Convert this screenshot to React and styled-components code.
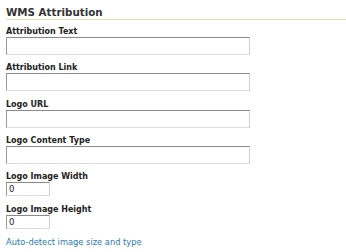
import React from 'react';
import styled, { createGlobalStyle } from 'styled-components';

const GlobalStyle = createGlobalStyle`
  html, body {
    margin: 0;
    padding: 0;
    background: #fff;
  }
  body {
    font-family: "DejaVu Sans", Verdana, sans-serif;
  }
`;

const Panel = styled.div`
  width: 346px;
  height: 252px;
  box-sizing: border-box;
  padding: 5px 0 0 6px;
  display: flex;
  flex-direction: column;
  overflow: hidden;
`;

const Heading = styled.h2`
  margin: 0 0 6px 0;
  font-size: 10.3px;
  line-height: 14px;
  font-weight: bold;
  color: #333;
  border-bottom: 1px solid #dfe2b9;
`;

const Field = styled.div`
  display: flex;
  flex-direction: column;
  align-items: flex-start;
  margin-bottom: 7.33px;
`;

const Label = styled.label`
  font-size: 8px;
  line-height: 11px;
  font-weight: bold;
  color: #222;
`;

const TextInput = styled.input`
  box-sizing: border-box;
  width: ${p => (p.$small ? '44px' : '244px')};
  height: ${p => (p.$small ? '14px' : '18px')};
  margin: 0;
  padding: 0 2px;
  border: 1px solid;
  border-color: #8a8a8a #cfcfcf #dcdcdc #9a9a9a;
  background: #fff;
  font-family: "DejaVu Sans", Verdana, sans-serif;
  font-size: 8.5px;
  color: #1a1a2a;
  outline: none;
`;

const Footer = styled.div`
  margin-top: -6px;
`;

const AutoLink = styled.a`
  font-size: 8.3px;
  line-height: 12px;
  color: #2b7bb8;
  text-decoration: none;
  cursor: pointer;
`;

const fields = [
  { label: 'Attribution Text', value: '' },
  { label: 'Attribution Link', value: '' },
  { label: 'Logo URL', value: '' },
  { label: 'Logo Content Type', value: '' },
  { label: 'Logo Image Width', value: '0', small: true },
  { label: 'Logo Image Height', value: '0', small: true },
];

export default function App() {
  return (
    <>
      <GlobalStyle />
      <Panel>
        <Heading>WMS Attribution</Heading>
        {fields.map(f => (
          <Field key={f.label}>
            <Label>{f.label}</Label>
            <TextInput $small={f.small} defaultValue={f.value} />
          </Field>
        ))}
        <Footer>
          <AutoLink>Auto-detect image size and type</AutoLink>
        </Footer>
      </Panel>
    </>
  );
}
